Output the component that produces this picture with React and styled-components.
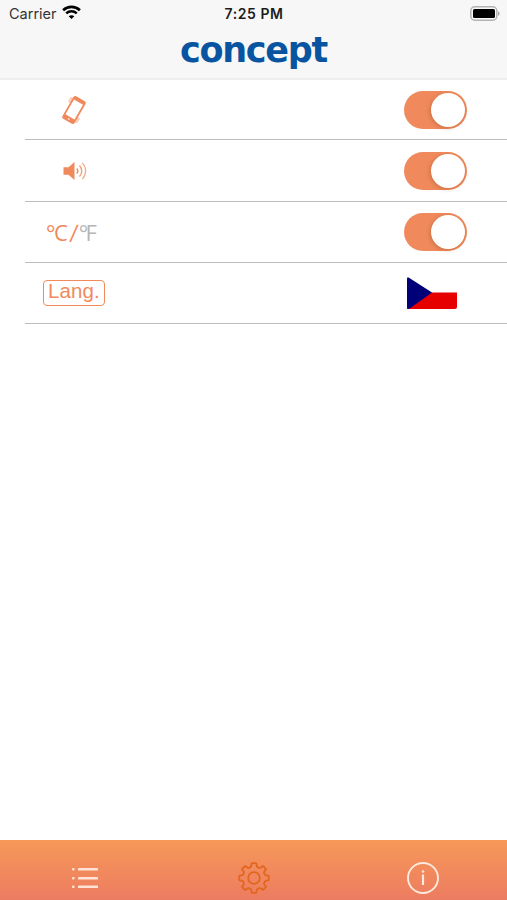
import React from 'react';
import styled, { createGlobalStyle } from 'styled-components';

const ORANGE = '#f08a5c';

const GlobalStyle = createGlobalStyle`
  * {
    box-sizing: border-box;
  }
  body {
    margin: 0;
    background: #ffffff;
    font-family: Inter, 'Liberation Sans', sans-serif;
  }
`;

const Screen = styled.div`
  display: flex;
  flex-direction: column;
  width: 507px;
  height: 900px;
  overflow: hidden;
  background: #ffffff;
`;

const Header = styled.header`
  flex: none;
  height: 80px;
  background: #f7f7f7;
  border-bottom: 2px solid #eeeeee;
`;

const StatusBar = styled.div`
  display: grid;
  grid-template-columns: 1fr auto 1fr;
  align-items: center;
  height: 27px;
  padding: 0 7px 0 9px;
`;

const Carrier = styled.div`
  display: flex;
  align-items: center;
  gap: 5px;
  font-size: 14.5px;
  color: #333333;
  svg {
    margin-top: -2px;
  }
`;

const Clock = styled.div`
  margin-left: -1px;
  font-size: 14px;
  font-weight: 600;
  letter-spacing: 0.55px;
  color: #1c1c1c;
`;

const BatterySlot = styled.div`
  display: flex;
  justify-content: flex-end;
`;

const Logo = styled.div`
  height: 50px;
  font-family: 'DejaVu Sans', sans-serif;
  font-size: 35px;
  font-weight: 700;
  line-height: 46px;
  letter-spacing: -1.3px;
  text-align: center;
  white-space: nowrap;
  color: #0854a0;
`;

const List = styled.main`
  flex: 1;
`;

const Row = styled.div`
  display: flex;
  align-items: center;
  justify-content: space-between;
  height: ${({ $height }) => $height}px;
  margin-left: 25px;
  padding-right: 40px;
  border-bottom: 1px solid #bdbdbd;
`;

const IconCell = styled.div`
  display: flex;
  align-items: center;
  justify-content: center;
  width: 98px;
  svg {
    display: block;
  }
`;

const Toggle = styled.div`
  display: flex;
  align-items: center;
  justify-content: flex-end;
  width: 63px;
  height: 38px;
  padding: 2px;
  border-radius: 19px;
  background: ${ORANGE};
`;

const Knob = styled.div`
  width: 34px;
  height: 34px;
  border-radius: 50%;
  background: #ffffff;
  box-shadow: -1px 1px 4px rgba(120, 50, 10, 0.3);
`;

const Units = styled.div`
  display: flex;
  width: 98px;
  padding: 0 0 1px 21px;
  font-family: 'Open Sans', 'Noto Sans', sans-serif;
  font-size: 22px;
  line-height: 30px;
`;

const Unit = styled.span`
  letter-spacing: ${({ $active }) => ($active ? -1.3 : -2.6)}px;
  color: ${({ $active }) => ($active ? ORANGE : '#b5b5b5')};
`;

const Slash = styled.span`
  margin: 0 1px 0 3px;
  color: ${ORANGE};
  transform: skewX(-6deg) scaleY(1.1);
`;

const LangBadge = styled.div`
  width: 62px;
  height: 26px;
  border: 1.5px solid ${ORANGE};
  border-radius: 4px;
  font-family: 'Liberation Sans', sans-serif;
  font-size: 20.5px;
  line-height: 20px;
  letter-spacing: 0.1px;
  text-align: center;
  color: ${ORANGE};
`;

const FlagSlot = styled.div`
  width: 60px;
  padding-top: 1px;
  svg {
    display: block;
  }
`;

const TabBar = styled.nav`
  flex: none;
  display: grid;
  grid-template-columns: repeat(3, 1fr);
  height: 60px;
  padding-top: 16px;
  background: linear-gradient(#f79858, #ec7c61);
`;

const Tab = styled.div`
  display: flex;
  justify-content: center;
`;

const WifiIcon = () => (
  <svg width="19" height="15" viewBox="0 0 19 15" fill="none" stroke="#000">
    <path d="M1.1 5.2C5.9.7 13.1.7 17.9 5.2" strokeWidth="2.7" />
    <path d="M4.2 8.4c3-2.8 7.6-2.8 10.6 0" strokeWidth="2.5" />
    <path d="M9.5 14 6.7 11.2c1.6-1.4 4-1.4 5.6 0z" fill="#000" stroke="none" />
  </svg>
);

const BatteryIcon = () => (
  <svg width="30" height="15" viewBox="0 0 30 15">
    <rect x=".8" y=".8" width="26" height="13.4" rx="4" fill="#f7f7f7" stroke="#b3b3b3" strokeWidth="1.5" />
    <rect x="3" y="3" width="22" height="9" rx="1.5" fill="#000" />
    <path d="M28 5.2c2 .8 2 3.8 0 4.6z" fill="#a5a5a5" />
  </svg>
);

const PhoneIcon = () => (
  <svg width="28" height="32" viewBox="-14 -16 28 32">
    <g transform="rotate(30)">
      <rect x="-9.5" y="-10" width="4" height="6" rx="1" fill="#f9cfba" />
      <rect x="5.5" y="4" width="4" height="6" rx="1" fill="#f9cfba" />
      <rect x="-7" y="-13" width="14" height="26" rx="2" fill={ORANGE} />
      <rect x="-5.2" y="-9" width="10.4" height="17" fill="#fff" />
      <circle cy="10.4" r="1" fill="#fbd9c8" />
    </g>
  </svg>
);

const SpeakerIcon = () => (
  <svg width="25" height="20" viewBox="-1 0 25 20" fill="none" stroke={ORANGE}>
    <path d="M.5 6.2h5L11.5 1v18l-6-5.2h-5z" fill={ORANGE} stroke="none" />
    <path d="M13.8 7.5c1.3 1.5 1.3 3.5 0 5" strokeWidth="1.3" />
    <path d="M16.5 4.5c3 3.2 3 7.8 0 11" strokeWidth="1.3" opacity=".85" />
    <path d="M19.3 1.9c4.4 4.6 4.4 11.6 0 16.2" strokeWidth="1.3" opacity=".7" />
  </svg>
);

const CzechFlag = () => (
  <svg width="51" height="33" viewBox="0 0 51 33">
    <path d="M0 32V15.5h50v14q0 2.5-2.5 2.5H2z" fill="#e60000" />
    <path d="M0 2Q0-.5 2 .8L25 15.5 2 32Q0 32 0 30z" fill="#000078" />
  </svg>
);

const ListIcon = () => (
  <svg width="28" height="44" viewBox="0 0 28 44" fill="#ffe3d6">
    {[12, 21, 29.5].map((y) => (
      <React.Fragment key={y}>
        <rect x="1" y={y} width="2.6" height="2.4" rx="1" />
        <rect x="7" y={y} width="20" height="2.4" rx=".5" />
      </React.Fragment>
    ))}
  </svg>
);

// eight flat teeth joined by round hollows
const gearPath = () => {
  const at = (r, deg) => {
    const a = (deg * Math.PI) / 180;
    return `${(r * Math.cos(a)).toFixed(2)} ${(r * Math.sin(a)).toFixed(2)}`;
  };
  const teeth = [];
  for (let i = 0; i < 8; i += 1) {
    const c = i * 45;
    teeth.push(
      `${i ? 'L' : 'M'}${at(13, c - 11)}Q${at(14.9, c - 11)} ${at(14.9, c - 7)}L${at(14.9, c + 7)}Q${at(14.9, c + 11)} ${at(13, c + 11)}A3 3 0 0 0 ${at(13, c + 34)}`,
    );
  }
  return `${teeth.join('')}Z`;
};

const GearIcon = () => (
  <svg width="34" height="44" viewBox="-17 -22 34 44" fill="none" stroke="#e2661f" strokeWidth="1.8" strokeLinejoin="round">
    <path d={gearPath()} />
    <circle r="5.8" />
  </svg>
);

const InfoIcon = () => (
  <svg width="34" height="44" viewBox="-17 -22 34 44" fill="none" stroke="#ffe8de">
    <circle r="15" strokeWidth="1.9" />
    <path d="M0-3.5V7" strokeWidth="2.2" />
    <circle cy="-6.5" r="1.3" fill="#ffe8de" stroke="none" />
  </svg>
);

const Switch = () => (
  <Toggle role="switch" aria-checked="true">
    <Knob />
  </Toggle>
);

const App = () => (
  <>
    <GlobalStyle />
    <Screen>
      <Header>
        <StatusBar>
          <Carrier>
            Carrier
            <WifiIcon />
          </Carrier>
          <Clock>7:25 PM</Clock>
          <BatterySlot>
            <BatteryIcon />
          </BatterySlot>
        </StatusBar>
        <Logo>concept</Logo>
      </Header>
      <List>
        <Row $height={60}>
          <IconCell>
            <PhoneIcon />
          </IconCell>
          <Switch />
        </Row>
        <Row $height={62}>
          <IconCell>
            <SpeakerIcon />
          </IconCell>
          <Switch />
        </Row>
        <Row $height={61}>
          <Units>
            <Unit $active>°C</Unit>
            <Slash>/</Slash>
            <Unit>°F</Unit>
          </Units>
          <Switch />
        </Row>
        <Row $height={61}>
          <IconCell>
            <LangBadge>Lang.</LangBadge>
          </IconCell>
          <FlagSlot>
            <CzechFlag />
          </FlagSlot>
        </Row>
      </List>
      <TabBar>
        <Tab>
          <ListIcon />
        </Tab>
        <Tab>
          <GearIcon />
        </Tab>
        <Tab>
          <InfoIcon />
        </Tab>
      </TabBar>
    </Screen>
  </>
);

export default App;
